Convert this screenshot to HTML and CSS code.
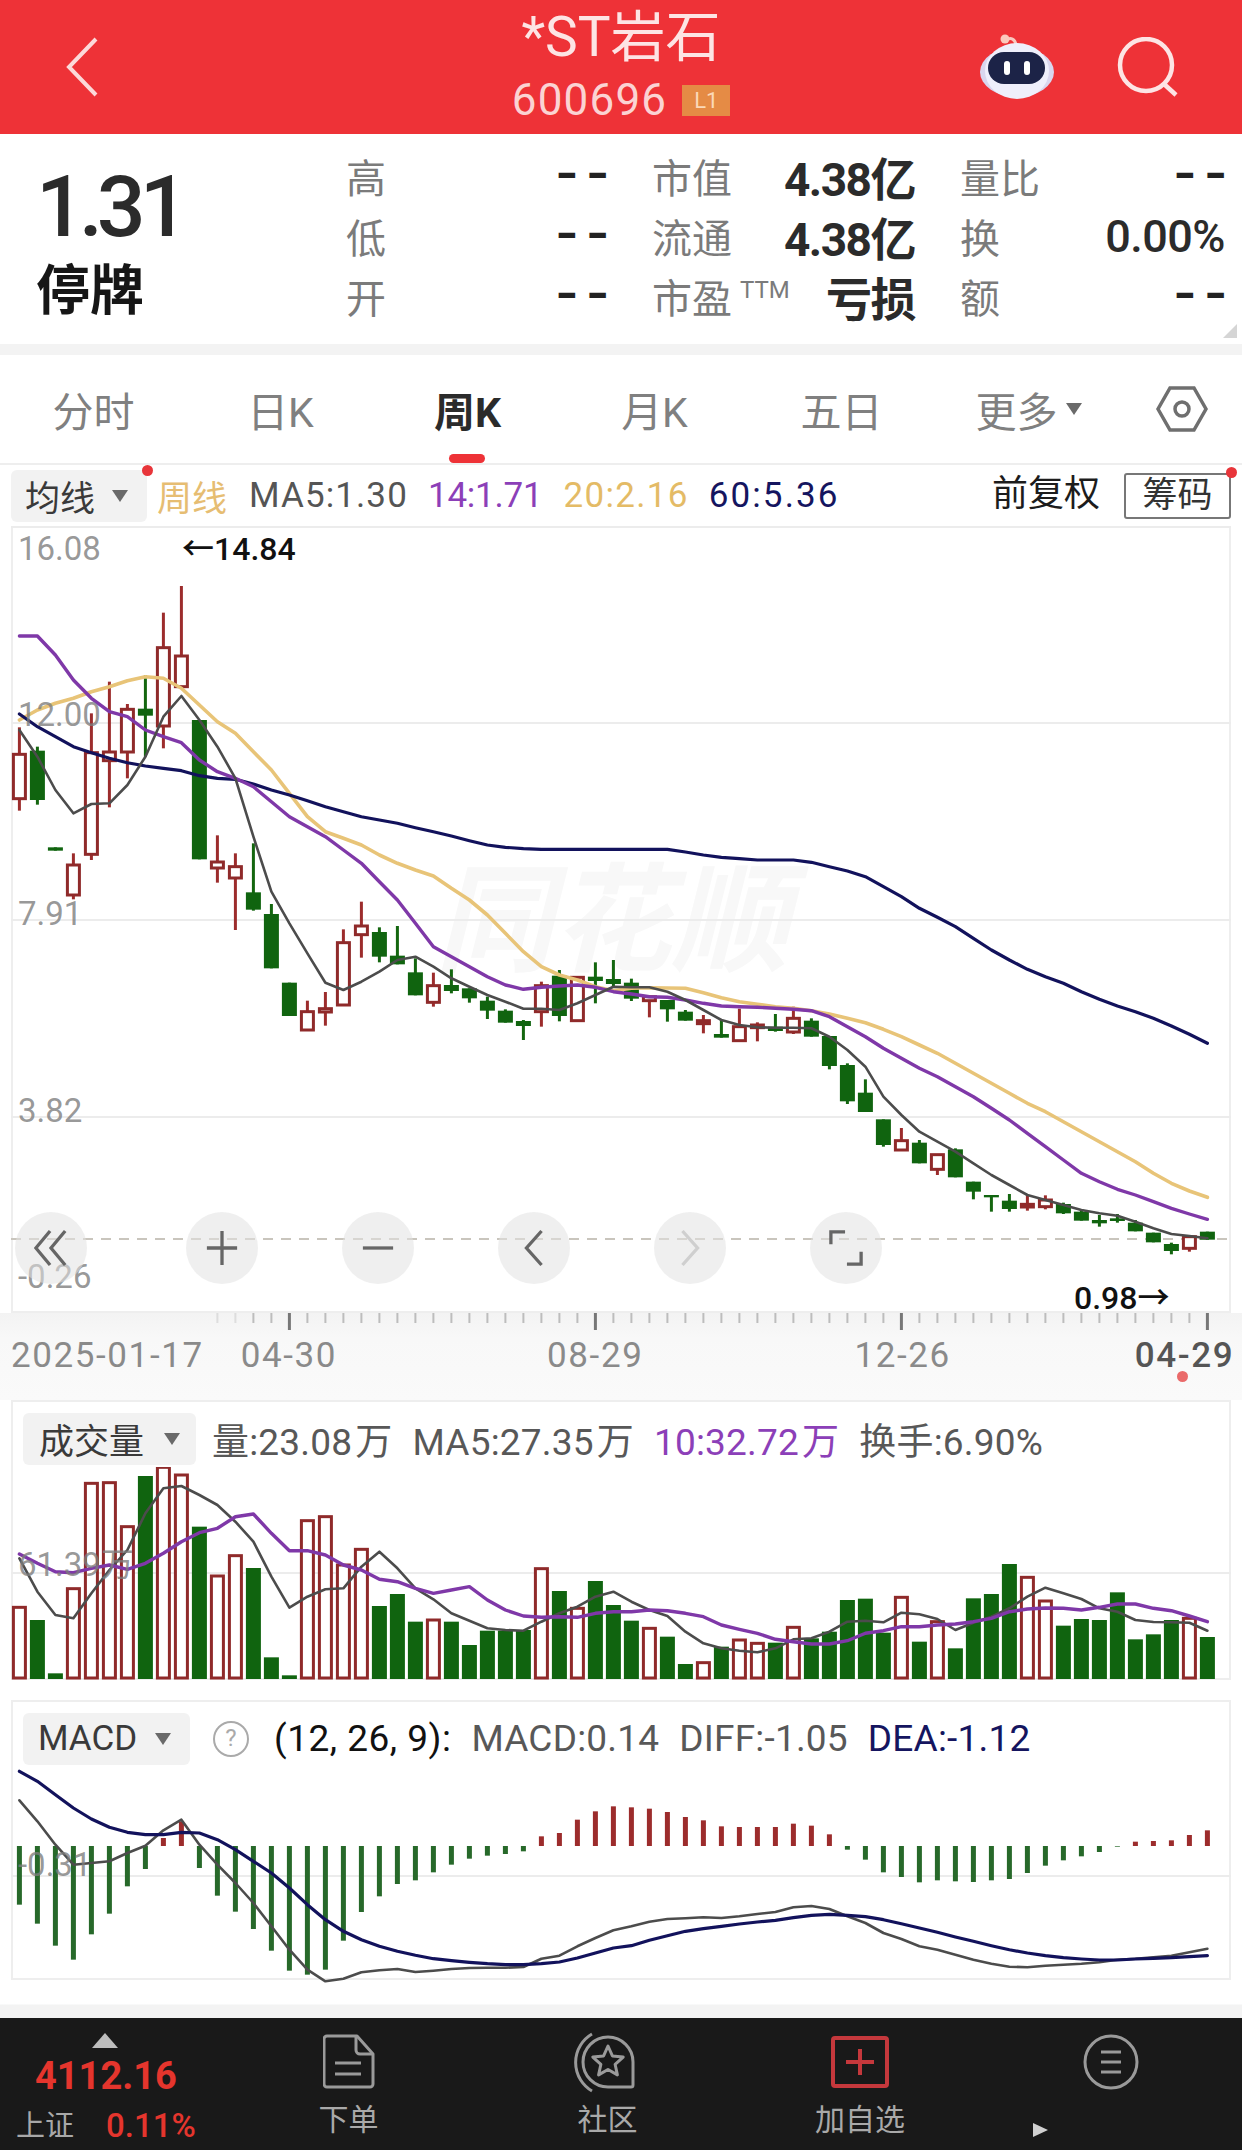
FILE: index.html
```html
<!DOCTYPE html>
<html lang="zh-CN">
<head>
    <meta charset="UTF-8">
    <title>*ST岩石 周K</title>
    <link rel="stylesheet" href="styles.css">
</head>
<body>
    <header class="topbar">
        <div class="topbar-left">
            <svg class="back-icon" viewBox="0 0 32 60"><path d="M30 2 3 30l27 28"/></svg>
        </div>
        <div class="topbar-title">
            <div class="stock-name">*ST岩石</div>
            <div class="stock-code">600696<span class="level-badge">L1</span></div>
        </div>
        <div class="topbar-right">
            <svg class="robot-icon" viewBox="0 0 76 68">
                <path class="robot-antenna" d="M27 8c5-3 9-1 10 5"/>
                <circle class="robot-ball" cx="26" cy="7" r="4.5"/>
                <ellipse class="robot-ear" cx="38" cy="40" rx="37" ry="25"/>
                <ellipse class="robot-head" cx="38" cy="39" rx="32" ry="28"/>
                <rect class="robot-face" x="9" y="20" width="57" height="32" rx="16"/>
                <rect class="robot-eye" x="25" y="29" width="6" height="14" rx="3"/>
                <rect class="robot-eye" x="45" y="29" width="6" height="14" rx="3"/>
            </svg>
            <svg class="search-icon" viewBox="0 0 62 60"><circle cx="29" cy="28" r="26"/><path d="M47 47l12 11"/></svg>
        </div>
    </header>

    <section class="quote">
        <div class="quote-price">
            <div class="price">1.31</div>
            <div class="price-status">停牌</div>
        </div>
        <div class="stats">
            <div class="stat"><span class="stat-label">高</span><span class="stat-empty">--</span></div>
            <div class="stat"><span class="stat-label">市值</span><span class="stat-value">4.38亿</span></div>
            <div class="stat"><span class="stat-label">量比</span><span class="stat-empty">--</span></div>
            <div class="stat"><span class="stat-label">低</span><span class="stat-empty">--</span></div>
            <div class="stat"><span class="stat-label">流通</span><span class="stat-value">4.38亿</span></div>
            <div class="stat"><span class="stat-label">换</span><span class="stat-value stat-thin">0.00%</span></div>
            <div class="stat"><span class="stat-label">开</span><span class="stat-empty">--</span></div>
            <div class="stat"><span class="stat-label">市盈<sup class="ttm">TTM</sup></span><span class="stat-value">亏损</span></div>
            <div class="stat"><span class="stat-label">额</span><span class="stat-empty">--</span></div>
        </div>
        <div class="corner-mark"></div>
    </section>
    <div class="strip"></div>

    <nav class="tabs">
        <a class="tab">分时</a>
        <a class="tab">日K</a>
        <a class="tab tab-active">周K</a>
        <a class="tab">月K</a>
        <a class="tab">五日</a>
        <a class="tab">更多<i class="tri tri-tab"></i></a>
        <svg class="gear-icon" viewBox="0 0 52 46">
            <path d="M14 2h24l12 21-12 21H14L2 23z"/>
            <circle cx="26" cy="23" r="7"/>
        </svg>
    </nav>

    <div class="ma-row">
        <div class="select select-ma">均线<i class="tri"></i></div>
        <span class="ma-week">周线</span>
        <span class="ma-item ma-gray">MA5:1.30</span>
        <span class="ma-item ma-purple">14:1.71</span>
        <span class="ma-item ma-yellow">20:2.16</span>
        <span class="ma-item ma-navy">60:5.36</span>
        <span class="adjust">前复权</span>
        <span class="chip-btn">筹码</span>
        <i class="dot dot-select"></i>
        <i class="dot dot-chip"></i>
    </div>

    <section class="panel panel-main">
        <svg class="chart-svg" id="klineChart" width="1220" height="787"></svg>
        <div class="watermark">同花顺</div>
        <span class="axis-tag tag-high">16.08</span>
        <span class="axis-tag tag-12">12.00</span>
        <span class="axis-tag tag-7">7.91</span>
        <span class="axis-tag tag-3">3.82</span>
        <span class="axis-tag tag-low">-0.26</span>
        <span class="peak-tag tag-max">←14.84</span>
        <span class="peak-tag tag-min">0.98→</span>
        <div class="chart-tools">
            <div class="tool tool-first">
                <svg viewBox="0 0 36 40"><path d="M17 2 2 20l15 18M33 2 18 20l15 18"/></svg>
            </div>
            <div class="tool">
                <svg viewBox="0 0 36 40"><path d="M2 20h32M18 2v36"/></svg>
            </div>
            <div class="tool">
                <svg viewBox="0 0 36 40"><path d="M2 20h32"/></svg>
            </div>
            <div class="tool">
                <svg viewBox="0 0 36 40"><path d="M26 2 10 20l16 18"/></svg>
            </div>
            <div class="tool tool-off">
                <svg viewBox="0 0 36 40"><path d="M10 2l16 18-16 18"/></svg>
            </div>
            <div class="tool">
                <svg viewBox="0 0 36 40"><path d="M2 16V3h15M34 24v13H19"/></svg>
            </div>
        </div>
    </section>

    <div class="date-axis">
        <svg class="tick-svg" id="dateTicks" width="1220" height="18"></svg>
        <div class="dates">
            <span class="date date-start">2025-01-17</span>
            <span class="date date-a">04-30</span>
            <span class="date date-b">08-29</span>
            <span class="date date-c">12-26</span>
            <span class="date date-end">04-29</span>
        </div>
        <i class="dot dot-date"></i>
    </div>

    <section class="panel panel-vol">
        <div class="panel-legend">
            <div class="select select-vol">成交量<i class="tri"></i></div>
            <span class="legend-item legend-first">量:23.08<em>万</em></span>
            <span class="legend-item">MA5:27.35<em>万</em></span>
            <span class="legend-item ma-purple">10:32.72<em>万</em></span>
            <span class="legend-item">换手:6.90%</span>
        </div>
        <svg class="chart-svg-flow" id="volChart" width="1220" height="213"></svg>
        <span class="axis-tag tag-vol">61.39万</span>
    </section>

    <section class="panel panel-macd">
        <div class="panel-legend">
            <div class="select select-macd">MACD<i class="tri"></i></div>
            <span class="help-mark">?</span>
            <span class="legend-item macd-params">(12, 26, 9):</span>
            <span class="legend-item">MACD:0.14</span>
            <span class="legend-item">DIFF:-1.05</span>
            <span class="legend-item ma-navy">DEA:-1.12</span>
        </div>
        <svg class="chart-svg-flow" id="macdChart" width="1220" height="216"></svg>
        <span class="axis-tag tag-macd">-0.31</span>
    </section>

    <div class="footer-gap"></div>

    <footer class="bottombar">
        <div class="index-box">
            <i class="index-arrow"></i>
            <div class="index-value">4112.16</div>
            <div class="index-line"><span class="index-name">上证</span><span class="index-pct">0.11%</span></div>
        </div>
        <a class="bar-item bar-order">
            <svg class="bar-icon" width="52" height="56" viewBox="0 0 52 56">
                <path d="M4 2h30l16 18v30a3 3 0 0 1-3 3H4a3 3 0 0 1-3-3V5a3 3 0 0 1 3-3z"/>
                <path d="M33 2v14a4 4 0 0 0 4 4h13M12 29h26M12 40h26"/>
            </svg>
            <span>下单</span>
        </a>
        <a class="bar-item bar-community">
            <svg class="bar-icon community-icon" width="68" height="62" viewBox="0 0 68 62">
                <path d="M38 6a25 25 0 0 1 25 25v23a2 2 0 0 1-2 2H38a25 25 0 0 1 0-50z"/>
                <path d="M22 3a33 33 0 0 0 0 57"/>
                <path d="M38 15l4.400 9.900 10.800 1.200-8.100 7.200 2.300 10.600-9.400-5.400-9.400 5.400 2.300-10.600-8.100-7.200 10.800-1.200z"/>
            </svg>
            <span>社区</span>
        </a>
        <a class="bar-item bar-add">
            <svg class="bar-icon" width="58" height="56" viewBox="0 0 58 52">
                <rect x="2" y="2" width="54" height="48" rx="2"/>
                <path d="M29 13v26M15 26h28"/>
            </svg>
            <span>加自选</span>
        </a>
        <a class="bar-item bar-menu">
            <svg class="bar-icon" width="56" height="56" viewBox="0 0 56 56">
                <ellipse cx="28" cy="28" rx="26" ry="26"/>
                <path d="M18 18h20M18 28h20M18 38h20"/>
            </svg>
        </a>
        <i class="speck"></i>
    </footer>

    <script src="chart.js"></script>
</body>
</html>
```

FILE: styles.css
```css
* {
    box-sizing: border-box;
}

body {
    margin: 0;
    width: 1242px;
    height: 2150px;
    overflow: hidden;
    background-color: white;
    font-family: Roboto, 'Noto Sans CJK SC', sans-serif;
    color: #333;
}

em, i {
    font-style: normal;
}

.topbar {
    height: 134px;
    background-color: #ee3237;
    display: grid;
    grid-template-columns: 1fr auto 1fr;
    align-items: center;
}

.topbar-left {
    padding-left: 66px;
    display: flex;
}

.back-icon {
    width: 32px;
    height: 60px;
    fill: none;
    stroke: #fcd9d9;
    stroke-width: 4;
}

.topbar-title {
    align-self: start;
    padding-top: 11px;
    text-align: center;
    color: #fde4e4;
}

.stock-name {
    font-size: 55px;
    line-height: 52px;
}

.stock-code {
    font-size: 44px;
    line-height: 46px;
    letter-spacing: 1.200px;
    color: #fbd3d3;
    display: flex;
    align-items: center;
    justify-content: center;
    margin-top: 14px;
}

.level-badge {
    margin-left: 15px;
    width: 48px;
    height: 31px;
    background-color: #e58b45;
    color: #fbd9b8;
    font-size: 22px;
    letter-spacing: 0;
    line-height: 31px;
}

.topbar-right {
    display: flex;
    justify-content: flex-end;
    align-items: center;
    padding-right: 63px;
    gap: 62px;
}

.robot-icon {
    width: 76px;
    height: 68px;
    margin-top: -2px;
}

.robot-antenna {
    fill: none;
    stroke: #f9c9c0;
    stroke-width: 3;
}

.robot-ball {
    fill: #fbc9bd;
}

.robot-ear {
    fill: #d9d6ee;
}

.robot-head {
    fill: #efeffb;
}

.robot-face {
    fill: #1c2347;
}

.robot-eye {
    fill: white;
}

.search-icon {
    width: 62px;
    height: 60px;
    fill: none;
    stroke: #fde4e4;
    stroke-width: 4.500;
}

.quote {
    height: 210px;
    display: flex;
    position: relative;
}

.quote-price {
    width: 346px;
    padding-left: 36px;
}

.price {
    font-size: 86px;
    font-weight: 500;
    line-height: 86px;
    letter-spacing: -6px;
    margin-top: 30px;
    color: #2b2b2b;
}

.price-status {
    font-size: 54px;
    font-weight: 700;
    line-height: 60px;
    margin-top: 12px;
    color: #161616;
}

.stats {
    padding-top: 12px;
    display: grid;
    grid-template-columns: 261px 263px 265px;
    grid-auto-rows: 60px;
    column-gap: 45px;
}

.stat {
    display: flex;
    justify-content: space-between;
    align-items: center;
}

.stat-label {
    font-size: 40px;
    color: #7b7b7b;
    white-space: nowrap;
}

.ttm {
    font-size: 24px;
    margin-left: 8px;
    vertical-align: 15px;
    line-height: 0;
}

.stat-value {
    font-size: 46px;
    font-weight: 700;
    color: #2b2b2b;
    letter-spacing: -1.500px;
}

.stat-thin {
    font-weight: 500;
    font-size: 45px;
    letter-spacing: -0.500px;
}

.stat-empty {
    display: inline-block;
    font-size: 40px;
    font-weight: 900;
    line-height: 40px;
    color: #222;
    letter-spacing: 4px;
    margin-right: -9px;
    margin-top: -2px;
    transform: scaleX(1.400);
    transform-origin: right center;
}

.corner-mark {
    position: absolute;
    right: 5px;
    bottom: 6px;
    border-style: solid;
    border-width: 0 0 14px 14px;
    border-color: transparent transparent #d5d5d5 transparent;
}

.strip {
    height: 11px;
    background-color: #f3f3f3;
}

.tabs {
    height: 110px;
    display: flex;
    align-items: center;
    border-bottom: 2px solid #eeeeee;
}

.tab {
    width: 187px;
    height: 100%;
    display: flex;
    align-items: center;
    justify-content: center;
    font-size: 41px;
    color: #808080;
    position: relative;
}

.tab-active {
    color: #2b2b2b;
    font-weight: 700;
}

.tab-active::after {
    content: '';
    position: absolute;
    left: 75px;
    bottom: 0;
    width: 36px;
    height: 9px;
    border-radius: 5px;
    background-color: #ee3237;
}

.gear-icon {
    width: 52px;
    height: 46px;
    margin-left: 34px;
    fill: none;
    stroke: #6f6f6f;
    stroke-width: 3.500;
}

.tri {
    display: inline-block;
    border-style: solid;
    border-width: 12px 8px 0 8px;
    border-color: #6a6a6a transparent transparent transparent;
}

.tri-tab {
    margin-left: 8px;
}

.ma-row {
    height: 61px;
    display: flex;
    align-items: center;
    padding-left: 11px;
    position: relative;
}

.select {
    background-color: #f2f2f2;
    border-radius: 6px;
    display: flex;
    align-items: center;
    font-size: 35px;
    color: #3a3a3a;
    height: 52px;
}

.select-ma {
    width: 136px;
    padding-left: 14px;
    gap: 17px;
}

.ma-week {
    font-size: 35px;
    color: #e6bd72;
    margin-left: 10px;
}

.ma-item {
    font-size: 35px;
    margin-left: 22px;
}

.ma-gray {
    color: #555;
    letter-spacing: 1.100px;
}

.ma-purple {
    color: #8c3fb8;
    letter-spacing: -0.200px;
    margin-left: 20px;
}

.ma-yellow {
    color: #e4bb66;
    letter-spacing: 1.300px;
    margin-left: 21px;
}

.ma-navy {
    color: #15155f;
    letter-spacing: 2.100px;
    margin-left: 20px;
}

.adjust {
    font-size: 36px;
    line-height: 44px;
    margin-top: -3px;
    color: #1c1c1c;
    margin-left: auto;
}

.chip-btn {
    width: 107px;
    height: 46px;
    border: 2px solid #777;
    border-radius: 3px;
    font-size: 35px;
    line-height: 41px;
    text-align: center;
    margin-left: 24px;
    margin-right: 11px;
    color: #333;
}

.dot {
    position: absolute;
    border-radius: 50%;
    background-color: #e8353a;
    width: 11px;
    height: 11px;
}

.dot-select {
    left: 142px;
    top: 0;
}

.dot-chip {
    left: 1226px;
    top: 2px;
}

.dot-date {
    left: 1177px;
    top: 58px;
    background-color: #ea6a6a;
}

.panel {
    margin-left: 11px;
    width: 1220px;
    position: relative;
    box-shadow: inset 0 0 0 2px #eeeeee;
}

.panel-main {
    height: 787px;
}

.panel-vol {
    height: 280px;
    padding-top: 12px;
}

.panel-macd {
    height: 280px;
    margin-top: 20px;
    padding-top: 12px;
}

.chart-svg {
    position: absolute;
    left: 0;
    top: 0;
}

.chart-svg-flow {
    display: block;
    margin-top: 2px;
}

.watermark {
    position: absolute;
    left: 424px;
    top: 331px;
    font-size: 118px;
    line-height: 130px;
    font-weight: 700;
    font-style: italic;
    color: #f8f8f8;
    z-index: -1;
}

.axis-tag {
    position: absolute;
    font-size: 33px;
    line-height: 1;
    color: rgba(125, 125, 125, 0.8);
}

.tag-high { left: 7px; top: 6px; }
.tag-12 { left: 7px; top: 172px; }
.tag-7 { left: 7px; top: 371px; }
.tag-3 { left: 7px; top: 568px; }
.tag-low { left: 7px; top: 734px; }
.tag-vol { left: 7px; top: 148px; }
.tag-macd { left: 7px; top: 148px; }

.peak-tag {
    position: absolute;
    font-size: 32px;
    font-weight: 500;
    line-height: 1;
    color: #111;
}

.tag-max { left: 171px; top: 7px; }
.tag-min { left: 1063px; top: 756px; }

.chart-tools {
    position: absolute;
    left: 4px;
    top: 686px;
    display: flex;
    gap: 84px;
}

.tool {
    width: 72px;
    height: 72px;
    border-radius: 50%;
    background-color: rgba(226, 226, 226, 0.55);
    display: flex;
    align-items: center;
    justify-content: center;
}

.tool-first {
    margin-right: 15px;
}

.tool svg {
    width: 34px;
    height: 38px;
    fill: none;
    stroke: #666;
    stroke-width: 3.500;
}

.tool-off svg {
    stroke: #cfcfcf;
}

.date-axis {
    height: 87px;
    padding-left: 11px;
    position: relative;
    background: linear-gradient(#f3f3f3, #f8f8f8 25px, #fafafa);
}

.tick-svg {
    display: block;
}

.dates {
    display: flex;
    margin-top: 5px;
    font-size: 35px;
    line-height: 40px;
    letter-spacing: 1.600px;
    color: #8a8a8a;
}

.date-a { margin-left: 37px; }
.date-b { margin-left: 210px; }
.date-c { margin-left: 211px; }

.date-end {
    margin-left: 184px;
    color: #555;
    font-weight: 500;
}

.panel-legend {
    height: 53px;
    display: flex;
    align-items: center;
    padding-left: 12px;
}

.select-vol {
    width: 173px;
    padding-left: 16px;
    gap: 20px;
}

.select-macd {
    width: 167px;
    padding-left: 15px;
    gap: 18px;
}

.legend-item {
    font-size: 37px;
    letter-spacing: 0.200px;
    color: #585858;
    margin-left: 20px;
    white-space: nowrap;
}

.legend-first {
    margin-left: 16px;
}

.legend-item em {
    margin-left: 3px;
}

.legend-item.ma-purple {
    color: #8c3fb8;
    letter-spacing: 0.200px;
}

.legend-item.ma-navy {
    color: #15155f;
    letter-spacing: 0.200px;
}

.help-mark {
    width: 36px;
    height: 36px;
    border: 2.500px solid #aaa;
    border-radius: 50%;
    margin-left: 23px;
    text-align: center;
    font-size: 24px;
    line-height: 31px;
    color: #aaa;
}

.legend-item.macd-params {
    color: #111;
    margin-left: 25px;
    letter-spacing: 0.500px;
}

.footer-gap {
    height: 38px;
    background: linear-gradient(white 24px, #f3f3f3 25px);
}

.bottombar {
    height: 132px;
    background-color: #191919;
    display: flex;
    position: relative;
}

.index-box {
    width: 222px;
    display: flex;
    flex-direction: column;
    padding-top: 15px;
    position: relative;
}

.index-arrow {
    align-self: flex-start;
    margin-left: 92px;
    border-style: solid;
    border-width: 0 13px 15px 13px;
    border-color: transparent transparent #bdbdbd transparent;
}

.index-value {
    font-size: 38px;
    font-weight: 700;
    line-height: 40px;
    margin-top: 8px;
    padding-left: 35px;
    color: #e5352d;
}

.index-line {
    display: flex;
    align-items: center;
    padding-left: 16px;
    margin-top: 12px;
}

.index-name {
    font-size: 29px;
    line-height: 36px;
    color: #a8a8a8;
}

.index-pct {
    font-size: 33px;
    font-weight: 500;
    line-height: 36px;
    margin-left: 32px;
    color: #e5352d;
}

.bar-item {
    display: flex;
    flex-direction: column;
    align-items: center;
    padding-top: 16px;
    font-size: 30px;
    line-height: 32px;
    color: #a9a9a9;
}

.bar-item span {
    margin-top: 14px;
}

.bar-order { width: 253px; }
.bar-community { width: 265px; }
.bar-add { width: 240px; }
.bar-menu { width: 262px; }

.bar-icon {
    fill: none;
    stroke: #9a9a9a;
    stroke-width: 3;
    stroke-linejoin: round;
}

.bar-item .community-icon {
    margin-top: -3px;
    margin-bottom: -3px;
    margin-left: -8px;
}

.bar-add .bar-icon {
    stroke: #c5383c;
    stroke-width: 4;
}

.speck {
    position: absolute;
    left: 1033px;
    top: 105px;
    border-style: solid;
    border-width: 7px 0 7px 15px;
    border-color: transparent transparent transparent #d0d0d0;
}

/* chart strokes */
.grid {
    stroke: #ececec;
    stroke-width: 2;
}

.dash {
    stroke: #c9c5bd;
    stroke-width: 2;
    stroke-dasharray: 10 8;
}

.up-wick {
    stroke: #9c2c2c;
    stroke-width: 3;
}

.up-body {
    fill: white;
    stroke: #8f2a2a;
    stroke-width: 3;
}

.down-wick {
    stroke: #14660f;
    stroke-width: 3;
}

.down-body {
    fill: #10640f;
}

.hist-up {
    fill: #9c2c2c;
}

.hist-down {
    fill: #27692a;
}

.tick {
    stroke: #bdbdbd;
    stroke-width: 2;
}

.tick-major {
    stroke: #777;
    stroke-width: 3;
}

.line {
    fill: none;
    stroke-linejoin: round;
    stroke-linecap: round;
}

.line-ma5 { stroke: #4c4c4c; stroke-width: 2.600; }
.line-ma14 { stroke: #7f38a8; stroke-width: 3.400; }
.line-ma20 { stroke: #e8c478; stroke-width: 3.600; }
.line-ma60 { stroke: #12125c; stroke-width: 3.200; }
```

FILE: chart.js
```js
const SVG_NS = 'http://www.w3.org/2000/svg';
const STEP = 18;

function xAt(i) {
    return 8.4 + STEP * i;
}

// values below were read off two crops of the chart, hence the base + v / 3
function scale(base, values) {
    return values.map(v => base + v / 3);
}

function add(svg, tag, attrs) {
    const el = document.createElementNS(SVG_NS, tag);
    for (const key in attrs) {
        el.setAttribute(key, attrs[key]);
    }
    svg.appendChild(el);
}

function drawLine(svg, ys, cls) {
    const points = ys.map((y, i) => xAt(i) + ',' + y.toFixed(1)).join(' ');
    add(svg, 'polyline', { points: points, class: 'line ' + cls });
}

function drawGrid(svg, y) {
    add(svg, 'line', { x1: 0, x2: 1220, y1: y, y2: y, class: 'grid' });
}

// [up?, bodyTop, bodyBottom, wickTop, wickBottom]
const candlesA = [
    [1, 673, 806, 592, 842], [0, 662, 810, 650, 824], [0, 952, 962, 952, 962], [1, 1005, 1095, 970, 1108],
    [1, 668, 973, 550, 990], [1, 666, 692, 455, 832], [1, 538, 666, 522, 745], [0, 536, 557, 436, 680],
    [1, 353, 588, 248, 655], [1, 378, 470, 168, 470], [0, 570, 988, 570, 988], [1, 996, 1014, 916, 1058],
    [1, 1010, 1044, 970, 1200], [0, 1087, 1139, 940, 1142], [0, 1152, 1315, 1122, 1315], [0, 1358, 1458, 1358, 1458],
    [1, 1445, 1500, 1412, 1503], [1, 1436, 1446, 1386, 1487], [1, 1238, 1425, 1198, 1425], [1, 1188, 1214, 1115, 1283],
    [0, 1206, 1280, 1192, 1297], [0, 1277, 1303, 1188, 1303], [0, 1327, 1396, 1285, 1396], [1, 1367, 1417, 1328, 1430],
    [0, 1365, 1383, 1318, 1390], [0, 1375, 1405, 1375, 1418], [0, 1412, 1442, 1400, 1467], [0, 1442, 1478, 1438, 1478],
    [0, 1473, 1488, 1470, 1530], [1, 1367, 1445, 1355, 1490], [0, 1337, 1458, 1320, 1474], [1, 1342, 1472, 1342, 1472],
    [0, 1340, 1353, 1297, 1420], [0, 1347, 1362, 1290, 1370]
];
const candlesB = [
    [0, 248, 296, 236, 303], [1, 290, 302, 290, 352], [0, 300, 328, 300, 365], [0, 335, 362, 330, 362],
    [1, 362, 371, 345, 400], [0, 402, 413, 358, 413], [1, 380, 422, 326, 422], [1, 375, 383, 367, 424],
    [0, 380, 393, 342, 395], [1, 355, 396, 320, 402], [0, 362, 410, 355, 410], [0, 408, 498, 408, 508],
    [0, 495, 604, 490, 612], [0, 578, 636, 538, 636], [0, 658, 735, 658, 740], [1, 722, 750, 684, 750],
    [0, 728, 790, 720, 790], [1, 764, 808, 764, 825], [0, 748, 832, 745, 832], [0, 845, 875, 845, 898],
    [0, 885, 892, 885, 935], [0, 902, 927, 882, 935], [1, 913, 921, 885, 932], [1, 900, 920, 886, 928],
    [0, 912, 940, 908, 942], [0, 935, 962, 932, 962], [0, 960, 970, 945, 980], [0, 955, 963, 942, 968],
    [0, 968, 994, 960, 994], [0, 998, 1027, 998, 1027], [0, 1032, 1053, 1028, 1063], [1, 1010, 1045, 1005, 1055],
    [0, 995, 1019, 995, 1019]
];

function drawCandle(svg, c, i, base) {
    const x = xAt(i);
    const [up, top, bottom, wickTop, wickBottom] = c;
    const y = v => base + v / 3;
    add(svg, 'line', { x1: x, x2: x, y1: y(wickTop), y2: y(wickBottom), class: up ? 'up-wick' : 'down-wick' });
    if (up) {
        add(svg, 'rect', { x: x - 6, y: y(top), width: 12, height: y(bottom) - y(top), class: 'up-body' });
    } else {
        add(svg, 'rect', { x: x - 7.500, y: y(top), width: 15, height: y(bottom) - y(top), class: 'down-body' });
    }
}

function drawKline() {
    const svg = document.getElementById('klineChart');
    drawGrid(svg, 1);
    drawGrid(svg, 197);
    drawGrid(svg, 394);
    drawGrid(svg, 591);
    add(svg, 'line', { x1: 0, x2: 1220, y1: 713, y2: 713, class: 'dash' });

    candlesA.forEach((c, i) => drawCandle(svg, c, i, 4));
    candlesB.forEach((c, i) => drawCandle(svg, c, i + 34, 374));

    const ma5 = scale(4, [600, 680, 780, 850, 822, 820, 765, 680, 560, 498, 570, 650, 745, 920, 1085, 1180, 1270, 1358, 1380, 1355, 1325, 1290, 1280, 1310, 1345, 1370, 1395, 1415, 1436, 1436, 1440, 1420, 1395, 1370])
        .concat(scale(374, [262, 262, 275, 300, 330, 360, 375, 382, 383, 383, 385, 410, 450, 500, 590, 645, 695, 725, 755, 790, 825, 855, 885, 900, 915, 930, 940, 947, 965, 985, 1002, 1008, 1015]));
    const ma14 = scale(4, [318, 318, 375, 450, 505, 545, 560, 600, 620, 638, 690, 725, 745, 770, 815, 860, 890, 920, 960, 1000, 1055, 1110, 1180, 1250, 1280, 1310, 1340, 1365, 1378, 1372, 1368, 1365, 1372, 1385])
        .concat(scale(374, [282, 290, 292, 300, 310, 318, 320, 322, 325, 328, 332, 350, 380, 410, 445, 475, 505, 530, 560, 590, 625, 660, 700, 740, 780, 820, 845, 868, 885, 905, 925, 942, 958]));
    const ma20 = scale(4, [570, 540, 520, 505, 485, 470, 452, 440, 445, 475, 525, 575, 610, 665, 720, 790, 860, 905, 925, 945, 975, 1000, 1020, 1038, 1075, 1110, 1155, 1210, 1265, 1310, 1335, 1350, 1370, 1382])
        .concat(scale(374, [265, 263, 264, 265, 278, 293, 305, 313, 320, 325, 332, 342, 355, 368, 388, 410, 435, 460, 490, 520, 550, 580, 610, 635, 665, 695, 725, 755, 785, 820, 850, 873, 892]));
    const ma60 = scale(4, [552, 590, 620, 650, 668, 685, 698, 708, 715, 722, 737, 745, 748, 762, 780, 795, 812, 830, 845, 860, 870, 880, 893, 905, 918, 932, 945, 952, 956, 958, 958, 958, 958, 958, 958, 958, 958, 966, 975, 982, 986, 990, 990, 990, 997, 1010, 1023, 1040, 1070, 1100, 1135, 1162, 1190])
        .concat(scale(374, [115, 150, 180, 208, 230, 250, 275, 298, 318, 335, 355, 378, 403, 430]));

    drawLine(svg, ma20, 'line-ma20');
    drawLine(svg, ma60, 'line-ma60');
    drawLine(svg, ma14, 'line-ma14');
    drawLine(svg, ma5, 'line-ma5');
}

function drawTicks() {
    const svg = document.getElementById('dateTicks');
    for (let i = 11; i <= 66; i++) {
        const major = (i - 15) % 17 === 0;
        add(svg, 'line', {
            x1: xAt(i), x2: xAt(i), y1: 0, y2: major ? 17 : 10,
            class: major ? 'tick tick-major' : 'tick',
            opacity: i < 13 ? 0.4 : 1
        });
    }
}

function drawVolume() {
    const svg = document.getElementById('volChart');
    const top = 1467;
    const kinds = [1, 0, 0, 1, 1, 1, 1, 0, 1, 1, 0, 1, 1, 0, 0, 0, 1, 1, 1, 1, 0, 0, 0, 1, 0, 0, 0, 0, 0, 1, 0, 1, 0, 0,
        0, 1, 0, 0, 1, 0, 1, 1, 0, 1, 0, 0, 0, 0, 0, 1, 0, 1, 0, 0, 0, 0, 1, 1, 0, 0, 0, 0, 0, 0, 0, 1, 0];
    const bars = scale(1180 - top, [1282, 1320, 1480, 1226, 910, 908, 1040, 888, 862, 885, 1040, 1188, 1127, 1164, 1432, 1486, 1022, 1010, 1155, 1108, 1278, 1242, 1325, 1320, 1325, 1395, 1352, 1352, 1350, 1166, 1233, 1285, 1203, 1275])
        .concat(scale(1400 - top, [662, 685, 710, 792, 788, 740, 720, 730, 728, 682, 715, 695, 600, 596, 698, 592, 725, 665, 745, 595, 582, 492, 532, 603, 677, 657, 660, 577, 718, 703, 660, 655, 711]));
    const bottom = 1679 - top;

    drawGrid(svg, 1573 - top);
    bars.forEach((y, i) => {
        if (kinds[i]) {
            add(svg, 'rect', { x: xAt(i) - 6, y: y, width: 12, height: bottom - y - 1, class: 'up-body' });
        } else {
            add(svg, 'rect', { x: xAt(i) - 7.500, y: y, width: 15, height: bottom - y, class: 'down-body' });
        }
    });

    const ma5 = scale(1180 - top, [1135, 1235, 1305, 1315, 1240, 1170, 1110, 1000, 925, 918, 945, 975, 1025, 1085, 1190, 1283, 1250, 1228, 1225, 1160, 1115, 1165, 1225, 1258, 1300, 1322, 1345, 1350, 1352, 1325, 1300, 1280, 1250, 1235])
        .concat(scale(1400 - top, [605, 630, 648, 695, 730, 745, 752, 757, 745, 718, 715, 695, 665, 662, 667, 638, 643, 657, 690, 668, 650, 625, 590, 563, 580, 597, 625, 635, 660, 666, 667, 668, 692]));
    const ma10 = scale(1180 - top, [1122, 1150, 1175, 1178, 1165, 1155, 1168, 1150, 1120, 1085, 1058, 1045, 1010, 1002, 1060, 1112, 1112, 1125, 1155, 1170, 1198, 1205, 1225, 1240, 1230, 1220, 1260, 1290, 1308, 1312, 1310, 1312, 1300, 1295])
        .concat(scale(1400 - top, [635, 630, 632, 640, 650, 675, 688, 700, 718, 725, 732, 732, 722, 700, 692, 680, 680, 675, 672, 665, 655, 635, 627, 624, 625, 630, 622, 612, 612, 625, 632, 648, 665]));
    drawLine(svg, ma5, 'line-ma5');
    drawLine(svg, ma10, 'line-ma14');
}

function drawMacd() {
    const svg = document.getElementById('macdChart');
    const top = 1764;
    const base = 1690 - top;
    const baseB = 1750 - top;
    const zero = 1843 - top;
    const hist = scale(base, [635, 692, 758, 800, 724, 662, 580, 528, 435, 385, 525, 608, 656, 708, 773, 833, 845, 830, 743, 657, 610, 573, 562, 538, 515, 497, 488, 483, 475, 430, 420, 380, 355, 340])
        .concat(scale(baseB, [163, 167, 177, 192, 202, 220, 222, 222, 222, 212, 218, 244, 290, 320, 358, 372, 388, 382, 385, 387, 382, 378, 360, 338, 322, 310, 297, 281, 266, 264, 262, 246, 232]));

    drawGrid(svg, 1873 - top);
    hist.forEach((y, i) => {
        const up = y < zero;
        add(svg, 'rect', {
            x: xAt(i) - 2.500,
            y: up ? y : zero,
            width: 5,
            height: Math.abs(y - zero),
            class: up ? 'hist-up' : 'hist-down'
        });
    });

    const diff = scale(base, [322, 385, 455, 515, 510, 505, 480, 458, 412, 380, 455, 515, 570, 630, 700, 770, 830, 865, 857, 838, 832, 828, 837, 833, 828, 825, 824, 824, 822, 797, 788, 760, 735, 712])
        .concat(scale(baseB, [520, 506, 498, 496, 493, 495, 490, 483, 477, 463, 459, 468, 490, 510, 540, 558, 580, 590, 605, 620, 632, 641, 643, 638, 635, 632, 628, 620, 617, 613, 608, 598, 587]));
    const dea = scale(base, [235, 265, 305, 345, 378, 403, 418, 425, 425, 418, 420, 440, 470, 505, 540, 585, 635, 680, 715, 740, 760, 775, 787, 797, 803, 808, 812, 815, 815, 812, 807, 795, 780, 765])
        .concat(scale(baseB, [578, 562, 548, 535, 527, 520, 513, 507, 502, 494, 487, 484, 487, 491, 500, 512, 525, 538, 552, 565, 578, 590, 600, 608, 614, 618, 621, 621, 618, 616, 614, 611, 608]));
    drawLine(svg, diff, 'line-ma5');
    drawLine(svg, dea, 'line-ma60');
}

drawKline();
drawTicks();
drawVolume();
drawMacd();
```
